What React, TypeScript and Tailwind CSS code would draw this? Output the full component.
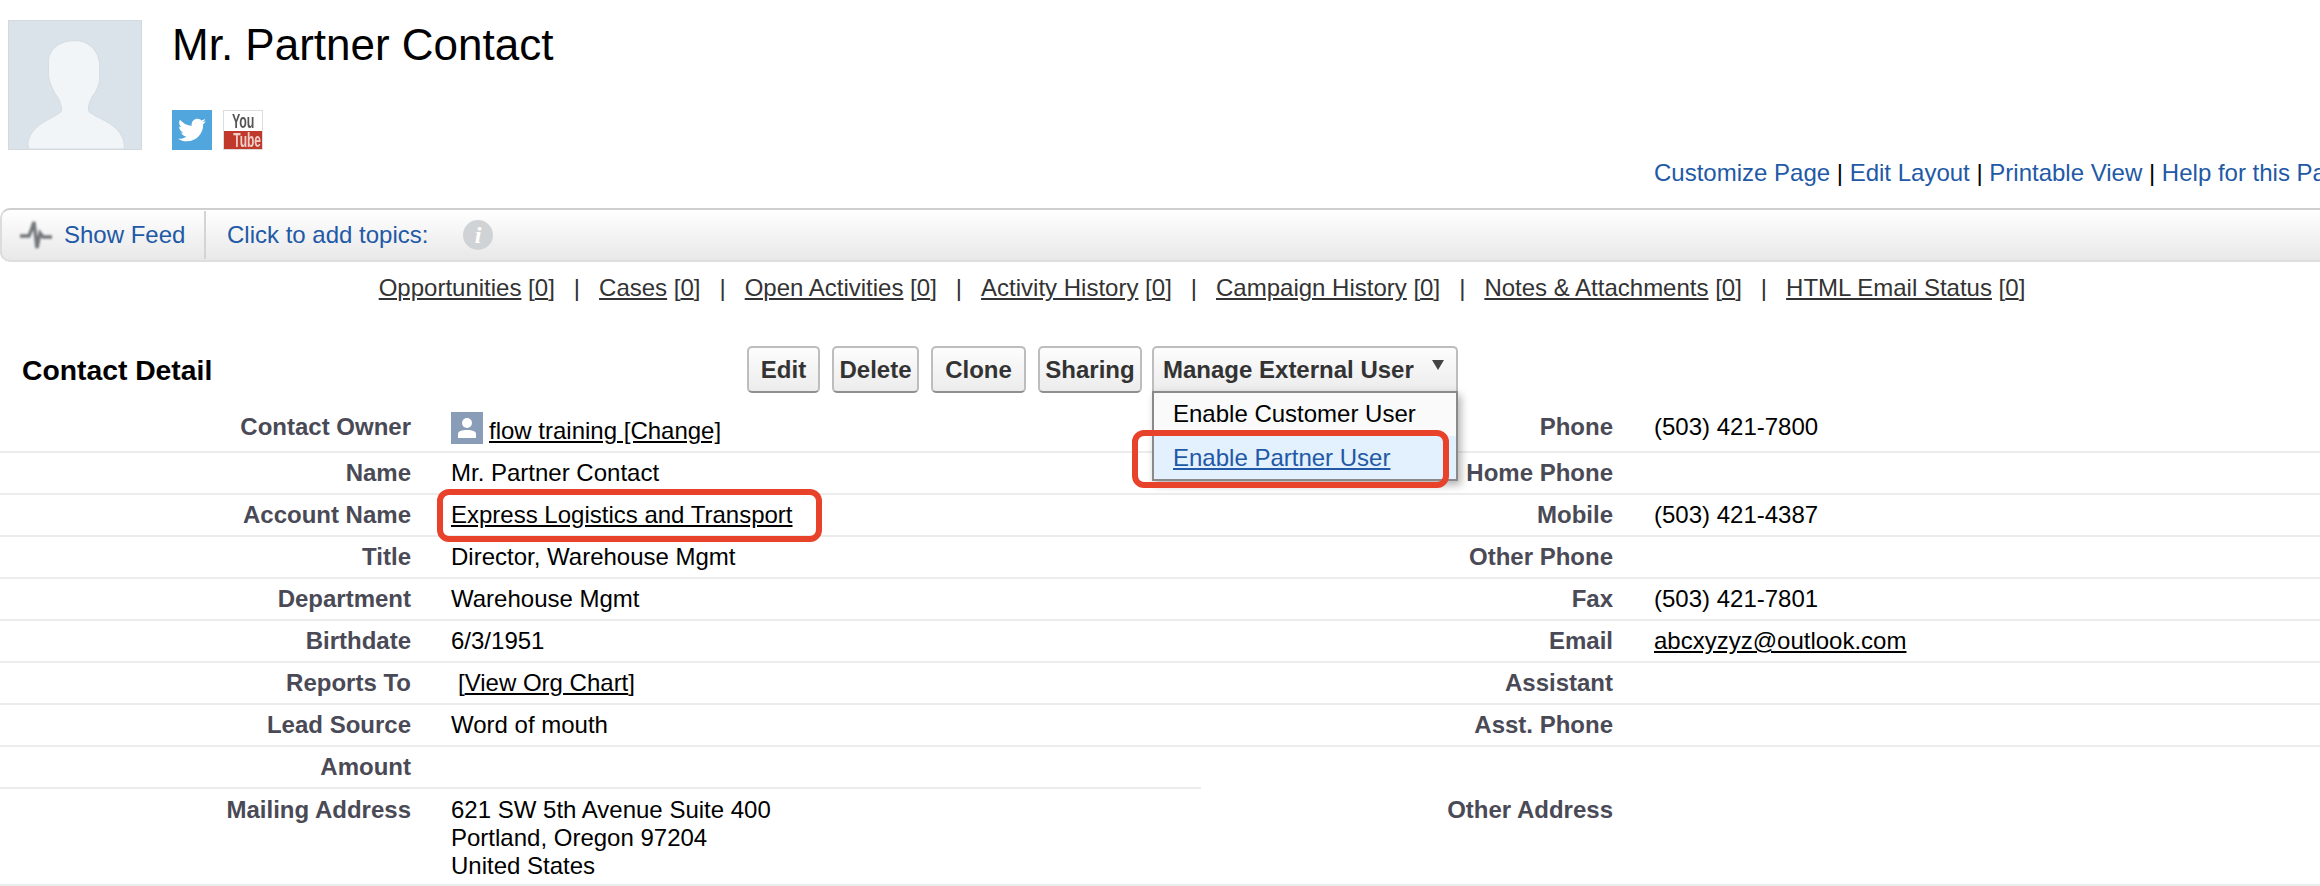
import { FaTwitter } from 'react-icons/fa';

const leftRows = [
  { label: 'Contact Owner', owner: true },
  { label: 'Name', value: 'Mr. Partner Contact' },
  { label: 'Account Name', account: true },
  { label: 'Title', value: 'Director, Warehouse Mgmt' },
  { label: 'Department', value: 'Warehouse Mgmt' },
  { label: 'Birthdate', value: '6/3/1951' },
  { label: 'Reports To', orgChart: true },
  { label: 'Lead Source', value: 'Word of mouth' },
  { label: 'Amount' },
];

const rightRows = [
  { label: 'Phone', value: '(503) 421-7800' },
  { label: 'Home Phone' },
  { label: 'Mobile', value: '(503) 421-4387' },
  { label: 'Other Phone' },
  { label: 'Fax', value: '(503) 421-7801' },
  { label: 'Email', email: 'abcxyzyz@outlook.com' },
  { label: 'Assistant' },
  { label: 'Asst. Phone' },
  { label: '' },
];

const related = [
  'Opportunities',
  'Cases',
  'Open Activities',
  'Activity History',
  'Campaign History',
  'Notes & Attachments',
  'HTML Email Status',
];

function Avatar() {
  return (
    <div className="w-[134px] h-[130px] bg-[#dbe3ea] border border-[#d3d9de] overflow-hidden">
      <svg width="132" height="128" viewBox="0 0 134 130" className="blur-[0.6px]">
        <path
          d="M66 20C80 19 92 30 92 46L92 58C92 66 88 72 85 76C82 82 80 86 81 92C90 100 114 104 117 125L117 130L20 130L19 125C22 104 44 100 53 92C54 84 50 78 47 74C44 68 40 62 40 52L40 42C40 28 52 20 66 20Z"
          fill="#f2f5f8"
          stroke="#d3dae1"
          strokeWidth="1"
        />
      </svg>
    </div>
  );
}

function YouTubeBadge() {
  return (
    <div className="w-[40px] h-[40px] flex flex-col font-bold border border-[#dcdcdc] overflow-hidden ml-[11px]">
      <div className="h-[20px] bg-white text-[#555] text-[20px] leading-[20px] text-center">
        <span className="inline-block scale-x-[0.62]">You</span>
      </div>
      <div className="flex-1 bg-[#c0392b] text-[#f0cfca] text-[20px] leading-[19px] text-center whitespace-nowrap">
        <span className="inline-block scale-x-[0.6]">Tube</span>
      </div>
    </div>
  );
}

function Button({ label, width }: { label: string; width: string }) {
  return (
    <div className={`${width} h-[47px] flex items-center justify-center rounded-[5px] border-2 border-[#bdbdbd] border-b-[#8f8f8f] bg-gradient-to-b from-[#fdfdfd] to-[#ececec] font-bold text-[#333]`}>
      {label}
    </div>
  );
}

function ManageMenu() {
  return (
    <div className="relative w-[306px] h-[45px] ml-[-2px] flex items-center pl-[9px] whitespace-nowrap rounded-t-[5px] border-2 border-b-0 border-[#bdbdbd] bg-gradient-to-b from-[#fdfdfd] to-[#ececec] font-bold text-[#333]">
      Manage External User
      <svg width="14" height="12" viewBox="0 0 14 12" className="absolute left-[277px] top-[11px]">
        <path d="M1 1H13L7 11Z" fill="#444" />
      </svg>
      <div className="absolute left-[-2px] top-[43px] w-[306px] h-[90px] z-10 bg-[#fafafa] border-2 border-[#8a8a8a] shadow-[3px_4px_8px_rgba(0,0,0,0.3)] font-normal text-black">
        <div className="h-[43px] pl-[19px] flex items-center pb-[2px]">Enable Customer User</div>
        <div className="h-[43px] pl-[19px] flex items-center bg-[#e3f0fd] text-[#2259a6] underline">Enable Partner User</div>
      </div>
      <div className="absolute left-[-22px] top-[82px] w-[317px] h-[58px] z-20 border-[6px] border-[#e8432a] rounded-[12px]" />
    </div>
  );
}

function LeftValue({ row }: { row: (typeof leftRows)[number] }) {
  if (row.owner) {
    return (
      <div className="flex items-start pt-[1px]">
        <div className="w-[32px] h-[32px] bg-[#8a9db8] flex items-center justify-center">
          <svg width="20" height="22" viewBox="0 0 20 22">
            <circle cx="10" cy="6" r="5" fill="#fff" />
            <path d="M1 21V17C1 14 5 13 10 13C15 13 19 14 19 17V21Z" fill="#fff" />
          </svg>
        </div>
        <span className="ml-[6px] pt-[5px] underline">flow training [Change]</span>
      </div>
    );
  }
  if (row.account) {
    return (
      <div className="relative pt-[6px]">
        <span className="underline">Express Logistics and Transport</span>
        <div className="absolute left-[-14px] top-[-6px] w-[385px] h-[53px] border-[6px] border-[#e8432a] rounded-[12px]" />
      </div>
    );
  }
  if (row.orgChart) {
    return (
      <div className="pt-[6px] pl-[7px]">
        [<span className="underline">View Org Chart</span>]
      </div>
    );
  }
  return <div className="pt-[6px]">{row.value}</div>;
}

export default function App() {
  return (
    <div className="w-[2320px] h-[886px] overflow-hidden bg-white text-black text-[24px] leading-[28px] font-['Liberation_Sans',Arial,sans-serif]">
      {/* Header */}
      <div className="flex pt-[20px] pl-[8px]">
        <Avatar />
        <div className="ml-[30px] h-[130px] flex flex-col justify-between">
          <h1 className="text-[44px] leading-[50px]">Mr. Partner Contact</h1>
          <div className="flex">
            <div className="w-[40px] h-[40px] bg-[#50a6dd] flex items-center justify-center">
              <FaTwitter className="text-white text-[28px]" />
            </div>
            <YouTubeBadge />
          </div>
        </div>
      </div>

      {/* Page links */}
      <div className="mt-[9px] pl-[1654px] whitespace-nowrap text-[#2259a6]">
        Customize Page <span className="text-black">|</span> Edit Layout <span className="text-black">|</span> Printable View <span className="text-black">|</span> Help for this Page
      </div>

      {/* Topic bar */}
      <div className="mt-[21px] h-[54px] flex items-center rounded-l-[10px] border-2 border-r-0 border-t-[#cfcfcf] border-l-[#dcdcdc] border-b-[#dedede] bg-gradient-to-b from-white to-[#e8e8e8] text-[#2259a6]">
        <svg width="34" height="32" viewBox="0 0 34 32" className="ml-[17px] blur-[0.8px]">
          <path d="M1 17H10L12 12L15 3L18 29L21 14L24 18H33" fill="none" stroke="#73777a" strokeWidth="3.4" />
        </svg>
        <span className="ml-[11px] w-[140px]">Show Feed</span>
        <div className="w-[2px] h-[48px] bg-[#d4d4d4]" />
        <span className="ml-[21px] w-[236px]">Click to add topics:</span>
        <div className="w-[30px] h-[30px] rounded-full bg-[#d0d3d6] text-white font-bold italic flex items-center justify-center font-['Liberation_Serif',serif]">
          i
        </div>
      </div>

      {/* Related lists */}
      <div className="mt-[12px] pl-[84px] flex justify-center whitespace-nowrap text-[#333]">
        {related.map((name, i) => (
          <span key={name} className="flex">
            {i > 0 && <span className="mx-[19px]">|</span>}
            <span>
              <span className="underline">{name}</span> [<span className="underline">0</span>]
            </span>
          </span>
        ))}
      </div>

      {/* Detail header */}
      <div className="mt-[44px] mb-[17px] flex pl-[22px]">
        <h2 className="w-[725px] font-bold text-[28.3px] leading-[48px]">Contact Detail</h2>
        <div className="flex gap-[12px]">
          <Button label="Edit" width="w-[73px]" />
          <Button label="Delete" width="w-[87px]" />
          <Button label="Clone" width="w-[95px]" />
          <Button label="Sharing" width="w-[104px]" />
          <ManageMenu />
        </div>
      </div>

      {/* Detail rows */}
      {leftRows.map((row, i) => {
        const right = rightRows[i];
        return (
          <div key={row.label} className="flex h-[42px]">
            <div className="w-[1201px] flex border-b-2 border-[#ececec]">
              <div className={`w-[411px] text-right font-bold text-[#4a4a56] ${i === 0 ? 'pt-[2px]' : 'pt-[6px]'}`}>{row.label}</div>
              <div className="ml-[40px] flex-1">
                <LeftValue row={row} />
              </div>
            </div>
            <div className={`flex-1 flex ${i === 8 ? '' : 'border-b-2 border-[#ececec]'}`}>
              <div className={`w-[412px] text-right font-bold text-[#4a4a56] ${i === 0 ? 'pt-[2px]' : 'pt-[6px]'}`}>{right.label}</div>
              <div className={`ml-[41px] flex-1 ${i === 0 ? 'pt-[2px]' : 'pt-[6px]'}`}>
                {right.email ? <span className="underline">{right.email}</span> : right.value}
              </div>
            </div>
          </div>
        );
      })}

      {/* Address row */}
      <div className="flex h-[97px] border-b-2 border-[#ececec] pt-[7px]">
        <div className="w-[1201px] flex">
          <div className="w-[411px] text-right font-bold text-[#4a4a56]">Mailing Address</div>
          <div className="ml-[40px]">
            621 SW 5th Avenue Suite 400
            <br />
            Portland, Oregon 97204
            <br />
            United States
          </div>
        </div>
        <div className="w-[412px] text-right font-bold text-[#4a4a56]">Other Address</div>
      </div>
    </div>
  );
}
